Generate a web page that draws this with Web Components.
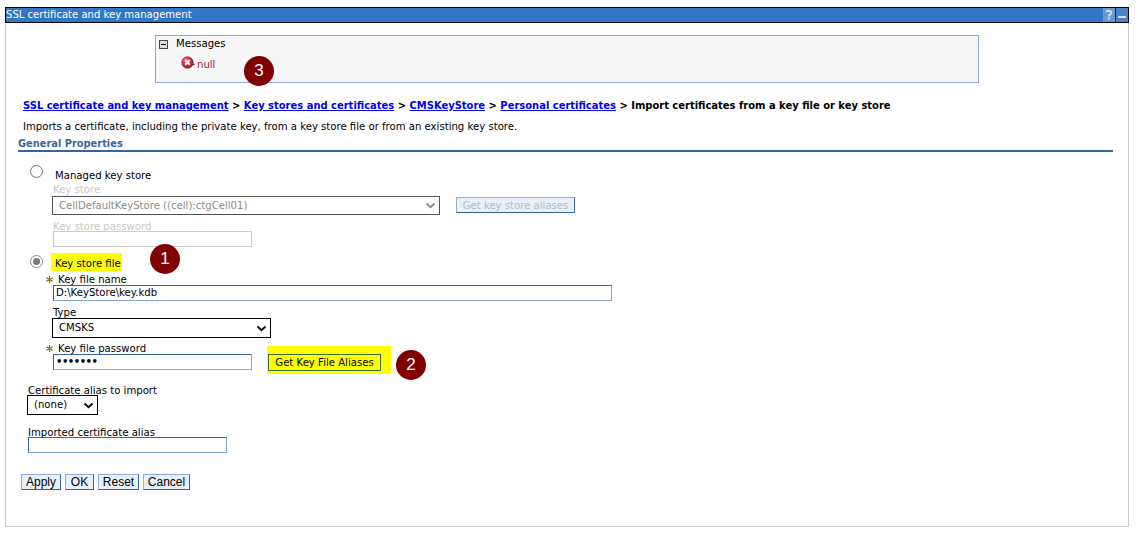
<!DOCTYPE html>
<html lang="en"><head><meta charset="utf-8"><title>SSL certificate and key management</title>
<style>
html,body{margin:0;padding:0;background:#fff}
body{font:10.12px/12px "DejaVu Sans",sans-serif;color:#000;width:1139px;height:535px;overflow:hidden}
</style></head><body>
<x-portlet title-text="SSL certificate and key management">
  <x-messages><x-error-line>null</x-error-line></x-messages>
  <x-badge n="3" style="--x:238px;--y:49px"></x-badge>
  <x-badge n="1" style="--x:144px;--y:237px"></x-badge>
  <x-badge n="2" style="--x:390px;--y:343px"></x-badge>
  <x-crumbs>
    <a href="#">SSL certificate and key management</a> &gt; <a href="#">Key stores and certificates</a> &gt; <a href="#">CMSKeyStore</a> &gt; <a href="#">Personal certificates</a> &gt; Import certificates from a key file or key store
  </x-crumbs>
  <x-desc>Imports a certificate, including the private key, from a key store file or from an existing key store.</x-desc>
  <x-section heading="General Properties"></x-section>
  <x-form>
    <x-radio-row>Managed key store</x-radio-row>
    <x-group style="--top:1px">
      <x-label disabled>Key store</x-label>
      <x-row style="--gap:16px">
        <x-select disabled width="388" value="CellDefaultKeyStore ((cell):ctgCell01)"></x-select>
        <x-btn disabled>Get key store aliases</x-btn>
      </x-row>
      <x-label disabled style="--top:6px">Key store password</x-label>
      <x-input disabled width="199"></x-input>
    </x-group>
    <x-radio-row checked highlight style="--top:8px">Key store file</x-radio-row>
    <x-group style="--top:2px">
      <x-label required>Key file name</x-label>
      <x-input width="559" value="D:\KeyStore\key.kdb"></x-input>
      <x-label style="--top:5px;--lh:13px">Type</x-label>
      <x-select width="219" value="CMSKS"></x-select>
      <x-label required style="--top:6px">Key file password</x-label>
      <x-row style="--gap:15px">
        <x-input secret width="199" value="•••••••"></x-input>
        <x-highlight><x-btn highlight>Get Key File Aliases</x-btn></x-highlight>
      </x-row>
    </x-group>
    <x-group style="--left:22px;--top:12px">
      <x-label style="--lh:15px">Certificate alias to import</x-label>
      <x-select width="71" value="(none)"></x-select>
      <x-label style="--top:12px">Imported certificate alias</x-label>
      <x-input width="199"></x-input>
    </x-group>
    <x-actions><x-btn plain w="40">Apply</x-btn><x-btn plain w="29">OK</x-btn><x-btn plain w="41">Reset</x-btn><x-btn plain w="47">Cancel</x-btn></x-actions>
  </x-form>
</x-portlet>
<script>
const def=(name,html,extra)=>{customElements.define(name,class extends HTMLElement{
  constructor(){super();this.attachShadow({mode:'open'}).innerHTML=html}
  connectedCallback(){extra&&extra.call(this,this.shadowRoot)}
})};
const font='"DejaVu Sans",sans-serif';
def('x-portlet',`<style>
:host{display:block;box-sizing:border-box;position:relative;width:1124px;height:520px;margin:7px 0 0 5px;border:1px solid #ccc;border-top:0;background:#fff}
.bar{box-sizing:border-box;height:16px;margin:0 -1px 0 -1px;border:1px solid #000;background:#3077c6;color:#fff;display:flex;align-items:center}
.t{flex:1;font:10.05px/14px ${font};white-space:nowrap}
svg{display:block}
.ic{display:flex;height:14px}
</style><div class="bar"><span class="t" id="t"></span><span class="ic">
<svg width="12" height="14" viewBox="0 0 12 14" role="img" aria-label="Help"><rect width="12" height="14" fill="#6499d2"/><path d="M3.6 4.2 C3.8 2.4 8.4 2.2 8.4 4.6 C8.4 6.4 6 6.2 6 8.4" fill="none" stroke="#cfe0f3" stroke-width="1.9"/><rect x="5" y="9.6" width="2" height="2" fill="#cfe0f3"/></svg>
<span style="width:1px;background:#0b2547"></span>
<svg width="12" height="14" viewBox="0 0 12 14" role="img" aria-label="Minimize"><rect width="12" height="14" fill="#4a84c4"/><rect x="2" y="8" width="8" height="2" fill="#cfe0f3"/></svg>
</span></div><slot></slot>`,function(r){r.getElementById('t').textContent=this.getAttribute('title-text')});
def('x-messages',`<style>
:host{display:block;box-sizing:border-box;width:824px;height:48px;margin:12px 0 0 149px;border:1px solid #8fa9dc;background:#f7f7f7;padding:1px 0 0 3px}
.h{display:flex;align-items:center;gap:8px;height:14px;line-height:14px}
svg{display:block}
</style><div class="h"><svg width="9" height="9" viewBox="0 0 9 9" aria-hidden="true"><rect x=".5" y=".5" width="8" height="8" fill="#d8dde3" stroke="#444"/><rect x="2" y="4" width="5" height="1" fill="#000"/></svg><span>Messages</span></div><slot></slot>`);
def('x-error-line',`<style>
:host{display:flex;align-items:center;gap:2px;margin:7px 0 0 22px;color:#a3123b;height:14px}
svg{display:block;margin-top:-5px}
</style><svg width="14" height="14" viewBox="0 0 14 14" aria-hidden="true"><defs><radialGradient id="g" cx=".35" cy=".3" r=".8"><stop offset="0" stop-color="#f58a98"/><stop offset=".55" stop-color="#d9263f"/><stop offset="1" stop-color="#8f1024"/></radialGradient></defs><path d="M10.5 9 L13.6 8.2" stroke="#333" stroke-width="1.2"/><circle cx="6.5" cy="6.5" r="5.7" fill="url(#g)" stroke="#7a1020" stroke-width=".7"/><path d="M4.2 4.2 L8.8 8.8 M8.8 4.2 L4.2 8.8" stroke="#fde6e8" stroke-width="2"/></svg><slot></slot>`);
def('x-badge',`<style>
:host{position:absolute;left:var(--x);top:var(--y);width:30px;height:30px;border-radius:50%;background:#800000;color:#fff;font:17px/30px "Liberation Sans",sans-serif;text-align:center}
</style><span id="n"></span>`,function(r){r.getElementById('n').textContent=this.getAttribute('n')});
def('x-crumbs',`<style>
:host{display:block;margin:17px 0 0 17px;font-weight:700;font-size:9.96px;line-height:12px;white-space:nowrap}
::slotted(a){color:#0000ee;text-decoration:underline}
</style><slot></slot>`);
def('x-desc',`<style>:host{display:block;margin:9px 0 0 17px;white-space:nowrap}</style><slot></slot>`);
def('x-section',`<style>
:host{display:block;box-sizing:border-box;width:1095px;margin:5px 0 0 12px;color:#3a6898;font-weight:700;font-size:9.85px;border-bottom:2px solid #336699;height:14px;line-height:12px}
</style><span id="h"></span>`,function(r){r.getElementById('h').textContent=this.getAttribute('heading')});
def('x-form',`<style>:host{display:block;padding:13px 0 0 0}</style><slot></slot>`);
def('x-radio-row',`<style>
:host{display:flex;align-items:flex-start;margin:var(--top,0) 0 0 24px;height:18px}
.r{box-sizing:border-box;width:13px;height:13px;border-radius:50%;border:1px solid #767676;background:#fff;margin-top:0;display:flex;align-items:center;justify-content:center;flex:none}
:host([checked]) .r{border:1.5px solid #8c8c8c}
:host([checked]) .r::after{content:"";width:7px;height:7px;border-radius:50%;background:#7c7c7c}
.l{margin-left:8px;padding:5px 0 0 4px;line-height:12px}
:host([highlight]) .l{background:#ff0;margin-left:8px;padding:5px 1px 0 4px;margin-top:-2px;height:13px}
</style><span class="r"></span><span class="l"><slot></slot></span>`);
def('x-group',`<style>:host{display:block;margin:var(--top,0) 0 0 var(--left,47px)}</style><slot></slot>`);
def('x-row',`<style>:host{display:flex;align-items:flex-start;gap:var(--gap,8px)}</style><slot></slot>`);
def('x-label',`<style>
:host{display:block;position:relative;height:10px;line-height:var(--lh,11px);margin-top:var(--top,0);white-space:nowrap}
:host([disabled]){color:#c8c8c8}
:host([required]){padding-left:5px;line-height:9px}
svg{position:absolute;left:-7px;top:1px;display:none}
:host([required]) svg{display:block}
</style><svg width="7" height="7" viewBox="0 0 7 7" aria-hidden="true"><path d="M3.5 0 V7 M0.4 1.7 L6.6 5.3 M6.6 1.7 L0.4 5.3" stroke="#7d6a10" stroke-width="1.1"/></svg><slot></slot>`);
def('x-input',`<style>
:host{display:block;box-sizing:border-box;height:16px;border:1px solid #84a8cc;border-top-color:#336699;border-left-color:#336699;background:#fff;padding-left:2px;line-height:14px;white-space:nowrap;overflow:hidden;flex:none}
:host([disabled]){border-color:#ccc}
:host([secret]){font-weight:700;letter-spacing:-.55px}
</style><span id="v"></span>`,function(r){this.style.width=this.getAttribute('width')+'px';r.getElementById('v').textContent=this.getAttribute('value')||''});
def('x-select',`<style>
:host{display:flex;align-items:center;justify-content:space-between;box-sizing:border-box;height:20px;margin:2px 0 0 -1px;border:1px solid #000;padding:0 3px 0 6px;background:#fff;line-height:14px;white-space:nowrap}
:host([disabled]){border-color:#555;color:#8c8c8c;height:19px}
svg{display:block;flex:none}
:host([disabled]) path{stroke:#8c8c8c}
</style><span id="v"></span><svg width="11" height="7" viewBox="0 0 11 7" aria-hidden="true"><path d="M1.5 1.5 L5.5 5.2 L9.5 1.5" fill="none" stroke="#111" stroke-width="2"/></svg>`,function(r){this.style.width=this.getAttribute('width')+'px';r.getElementById('v').textContent=this.getAttribute('value')});
def('x-highlight',`<style>:host{display:block;background:#ff0;padding:8px 10px 3px 1px;margin:-8px 0 -3px}</style><slot></slot>`);
def('x-btn',`<style>
:host{display:inline-flex;box-sizing:border-box;align-items:center;justify-content:center;height:17px;border:1px solid #336699;border-top-color:#8fb0d0;border-left-color:#8fb0d0;background:#e8f0fa;padding:0 6px;white-space:nowrap;line-height:14px}
:host([disabled]){color:#b9bcc2;margin-top:3px;width:119px;height:16px;padding-top:1px}
:host([highlight]){display:flex;background:#ff0;border-color:#3f6f3f;width:113px;height:17px}
:host([plain]){font:12px/14px "Liberation Sans",sans-serif;padding:0;height:16px}
</style><slot></slot>`,function(){const w=this.getAttribute('w');if(w)this.style.width=w+'px'});
def('x-actions',`<style>:host{display:flex;gap:4px;margin:21px 0 0 15px}</style><slot></slot>`);
</script>
</body></html>
